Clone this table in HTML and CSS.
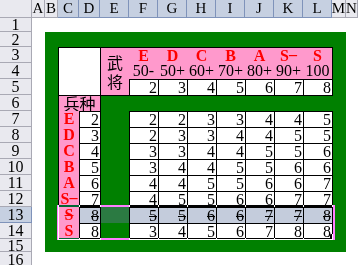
FILE: index.html
```html
<!DOCTYPE html>
<html lang="zh-CN">
<head>
<meta charset="utf-8">
<title>Sheet</title>
<link rel="stylesheet" href="styles.css">
</head>
<body>
<div class="sheet">
  <div class="corner"></div>
  <div class="col-hd">A</div>
  <div class="col-hd">B</div>
  <div class="col-hd sel">C</div>
  <div class="col-hd sel">D</div>
  <div class="col-hd sel">E</div>
  <div class="col-hd sel">F</div>
  <div class="col-hd sel">G</div>
  <div class="col-hd sel">H</div>
  <div class="col-hd sel">I</div>
  <div class="col-hd sel">J</div>
  <div class="col-hd sel">K</div>
  <div class="col-hd sel">L</div>
  <div class="col-hd">M</div>
  <div class="col-hd">N</div>

  <div class="row-hd">1</div>
  <div class="row-hd">2</div>
  <div class="row-hd">3</div>
  <div class="row-hd">4</div>
  <div class="row-hd">5</div>
  <div class="row-hd">6</div>
  <div class="row-hd">7</div>
  <div class="row-hd">8</div>
  <div class="row-hd">9</div>
  <div class="row-hd">10</div>
  <div class="row-hd">11</div>
  <div class="row-hd">12</div>
  <div class="row-hd sel">13</div>
  <div class="row-hd">14</div>
  <div class="row-hd">15</div>
  <div class="row-hd">16</div>

  <div class="board">
    <div class="table">
      <div class="cell box blank"></div>
      <div class="cell box general"><span>武</span><span>将</span></div>

      <div class="cell grade">E</div>
      <div class="cell grade">D</div>
      <div class="cell grade">C</div>
      <div class="cell grade">B</div>
      <div class="cell grade">A</div>
      <div class="cell grade">S<span class="dash">–</span></div>
      <div class="cell grade last">S</div>

      <div class="cell range">50-</div>
      <div class="cell range">50+</div>
      <div class="cell range">60+</div>
      <div class="cell range">70+</div>
      <div class="cell range">80+</div>
      <div class="cell range">90+</div>
      <div class="cell range last">100</div>

      <div class="cell box">2</div>
      <div class="cell box">3</div>
      <div class="cell box">4</div>
      <div class="cell box">5</div>
      <div class="cell box">6</div>
      <div class="cell box">7</div>
      <div class="cell box">8</div>

      <div class="cell box kind">兵种</div>
      <div class="gap wide"></div>

      <div class="cell letter">E</div><div class="cell box">2</div><div class="gap"></div>
      <div class="cell box">2</div><div class="cell box">2</div><div class="cell box">3</div><div class="cell box">3</div><div class="cell box">4</div><div class="cell box">4</div><div class="cell box">5</div>

      <div class="cell letter">D</div><div class="cell box">3</div><div class="gap"></div>
      <div class="cell box">2</div><div class="cell box">3</div><div class="cell box">3</div><div class="cell box">4</div><div class="cell box">4</div><div class="cell box">5</div><div class="cell box">5</div>

      <div class="cell letter">C</div><div class="cell box">4</div><div class="gap"></div>
      <div class="cell box">3</div><div class="cell box">3</div><div class="cell box">4</div><div class="cell box">4</div><div class="cell box">5</div><div class="cell box">5</div><div class="cell box">6</div>

      <div class="cell letter">B</div><div class="cell box">5</div><div class="gap"></div>
      <div class="cell box">3</div><div class="cell box">4</div><div class="cell box">4</div><div class="cell box">5</div><div class="cell box">5</div><div class="cell box">6</div><div class="cell box">6</div>

      <div class="cell letter">A</div><div class="cell box">6</div><div class="gap"></div>
      <div class="cell box">4</div><div class="cell box">4</div><div class="cell box">5</div><div class="cell box">5</div><div class="cell box">6</div><div class="cell box">6</div><div class="cell box">7</div>

      <div class="cell letter">S<span class="dash">–</span></div><div class="cell box">7</div><div class="gap"></div>
      <div class="cell box">4</div><div class="cell box">5</div><div class="cell box">5</div><div class="cell box">6</div><div class="cell box">6</div><div class="cell box">7</div><div class="cell box">7</div>

      <div class="cell letter struck">S</div><div class="cell box picked">8</div><div class="gap picked"></div>
      <div class="cell box picked">5</div><div class="cell box picked">5</div><div class="cell box picked">6</div><div class="cell box picked">6</div><div class="cell box picked">7</div><div class="cell box picked">7</div><div class="cell box picked">8</div>

      <div class="cell letter end">S</div><div class="cell box">8</div><div class="gap"></div>
      <div class="cell box">3</div><div class="cell box">4</div><div class="cell box">5</div><div class="cell box">6</div><div class="cell box">7</div><div class="cell box">8</div><div class="cell box">8</div>

      <div class="selection"><div class="handle"></div></div>
    </div>
  </div>
</div>
</body>
</html>
```

FILE: styles.css
```css
* {
  box-sizing: border-box;
  margin: 0;
  padding: 0;
}

html,
body {
  background: #ffffff;
}

body {
  width: 358px;
  height: 265px;
  overflow: hidden;
  font-family: "Liberation Serif", "Noto Sans CJK SC", serif;
  font-size: 16px;
  color: #000000;
}

.sheet {
  display: grid;
  grid-template-columns: 32px 13px 13px 21px 21px repeat(8, 29px) 14px 12px;
  grid-template-rows: 18px 14px 15px repeat(12, 16px) 13px 16px;
}

/* headers */
.corner,
.col-hd,
.row-hd {
  background: #e9e9ef;
  border-right: 1px solid #a9a9b4;
  border-bottom: 1px solid #a9a9b4;
  overflow: hidden;
  white-space: nowrap;
}

.col-hd {
  display: flex;
  justify-content: center;
  align-items: flex-end;
  font-size: 15px;
  line-height: 15px;
  padding-bottom: 1px;
}

.row-hd {
  grid-column: 1;
  display: flex;
  justify-content: center;
  align-items: center;
  font-size: 16px;
  line-height: 13px;
}

.col-hd.sel,
.row-hd.sel {
  background: #c6d0e1;
  border-color: #7f93ba;
}

/* green board */
.board {
  grid-column: 3 / 15;
  grid-row: 3 / 17;
  background: #008000;
  padding: 15px 14px 13px 13px;
}

.table {
  position: relative;
  display: grid;
  grid-template-columns: 21px 21px repeat(8, 29px);
  grid-template-rows: repeat(12, 16px);
}

.cell {
  font-family: "Liberation Serif", serif;
  font-size: 16px;
  line-height: 16px;
  text-align: right;
  padding-right: 1px;
  white-space: nowrap;
}

.box {
  background: #ffffff;
  border: 1px solid #000000;
  margin: 0 -1px -1px 0;
  line-height: 15px;
}

.blank {
  grid-column: 1 / 3;
  grid-row: 1 / 4;
}

.general {
  grid-column: 3;
  grid-row: 1 / 4;
  background: #ff99cc;
  border-right: 0;
  margin-right: 0;
  padding: 0;
  display: flex;
  flex-direction: column;
  justify-content: center;
  align-items: center;
  font-family: "Noto Sans CJK SC", sans-serif;
  line-height: 19px;
}

.grade {
  background: #ff99cc;
  color: #ff0000;
  font-weight: bold;
  text-align: center;
  padding: 0;
  border-top: 1px solid #000000;
  line-height: 15px;
}

.range {
  background: #ff99cc;
  text-align: center;
  padding: 0;
}

.grade.last,
.range.last {
  border-right: 1px solid #000000;
  margin-right: -1px;
}

.dash {
  display: inline-block;
  line-height: 10px;
  vertical-align: 1px;
}

.kind {
  grid-column: span 2;
  background: #ff99cc;
  text-align: center;
  padding: 0;
  font-family: "Noto Sans CJK SC", sans-serif;
  line-height: 14px;
}

.gap.wide {
  grid-column: span 8;
}

.letter {
  background: #ff99cc;
  color: #ff0000;
  font-weight: bold;
  text-align: center;
  padding: 0;
  border-left: 1px solid #000000;
}

.letter.end {
  border-bottom: 1px solid #000000;
  margin-bottom: -1px;
}

.struck,
.picked {
  text-decoration: line-through;
}

.box.picked {
  background: #c4ccdc;
}

.gap.picked {
  background: #2b7a42;
  margin-left: 1px;
}

/* XOR-style selection frame over row 13 */
.selection {
  grid-column: 1 / -1;
  grid-row: 11;
  position: absolute;
  top: -2px;
  left: -1px;
  right: -3px;
  bottom: -1px;
  border: 2px solid #ffffff;
  mix-blend-mode: difference;
  pointer-events: none;
}

.handle {
  position: absolute;
  right: -2px;
  bottom: -1px;
  width: 5px;
  height: 5px;
  background: #ffffff;
}
```
